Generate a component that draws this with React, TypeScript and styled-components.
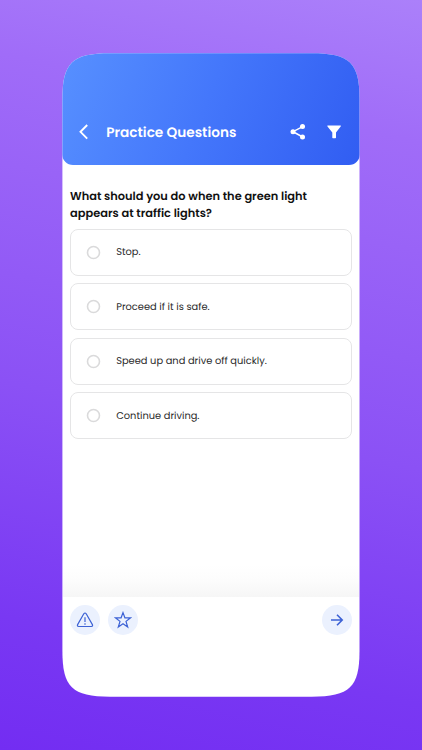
import React from "react";
import styled, { createGlobalStyle } from "styled-components";

const GlobalStyle = createGlobalStyle`
  * { box-sizing: border-box; }
  body { margin: 0; }
  button { border: 0; padding: 0; background: none; font: inherit; color: inherit; }
`;

const Stage = styled.main`
  width: 422px;
  height: 750px;
  padding: 53px 0 0 62px;
  overflow: hidden;
  background: linear-gradient(192deg, #ab80fa 0%, #a06cf8 17%, #8b51f5 56%, #7938f3 84%, #732df2 100%);
  font-family: Poppins, Inter, "Liberation Sans", sans-serif;
  text-rendering: geometricPrecision;
`;

const Phone = styled.section`
  display: flex;
  flex-direction: column;
  width: 298px;
  height: 644px;
  background: #fff;
  clip-path: path("M.4 46C.4 10 10 .3 48 .3H249.5C288 .3 297.5 10 297.5 46V598C297.5 634 288 643.7 249.5 643.7H48C10 643.7 .4 634 .4 598Z");
`;

const Header = styled.header`
  display: flex;
  align-items: center;
  height: 112px;
  flex: none;
  padding: 46px 16px 0 12px;
  border-radius: 0 0 11px 11px;
  background: linear-gradient(112deg, #5790ff 0%, #4477fb 48%, #315df2 100%);
  color: #fff;
`;

const Title = styled.h1`
  flex: 1;
  margin: 1px 0 0 12.3px;
  font-size: 13.65px;
  line-height: 20px;
  font-weight: 600;
  white-space: nowrap;
`;

const HeaderButton = styled.button<{ $gap?: number }>`
  display: flex;
  width: 20px;
  height: 20px;
  align-items: center;
  justify-content: center;
  margin-left: ${({ $gap = 0 }) => $gap}px;
`;

const Content = styled.div`
  flex: 1;
  padding: 22.5px 8px 0;
`;

const Question = styled.h2`
  margin: 0;
  color: #111;
  font-size: 11.4px;
  line-height: 17px;
  font-weight: 600;
`;

const QuestionLine = styled.span`
  display: block;
  white-space: nowrap;
`;

const Options = styled.div`
  display: grid;
  gap: 7.5px;
  margin-top: 7px;
`;

const Option = styled.label`
  display: flex;
  align-items: center;
  height: 47px;
  padding-left: 15px;
  border: 1px solid #e5e5e6;
  border-radius: 8px;
`;

const Radio = styled.svg`
  width: 15px;
  height: 15px;
  fill: none;
  stroke: #dadadb;
  stroke-width: 1.6;
`;

const OptionText = styled.span`
  margin: 2px 0 0 15.2px;
  color: #292929;
  font-size: 9.85px;
  line-height: 16px;
`;

const BottomShade = styled.div`
  height: 32px;
  flex: none;
  margin: 0 1px;
  background: linear-gradient(to bottom, #fff 0%, #fcfcfc 50%, #f6f6f6 100%);
`;

const Footer = styled.footer`
  display: flex;
  gap: 7.5px;
  height: 100px;
  flex: none;
  padding: 7.6px 7.6px 0 7.8px;
`;

const RoundButton = styled.button<{ $end?: boolean }>`
  display: flex;
  align-items: center;
  justify-content: center;
  width: 30.4px;
  height: 30.4px;
  margin-left: ${({ $end }) => ($end ? "auto" : "0")};
  border-radius: 50%;
  background: #ebf1fe;
  color: #3d62d5;
`;

const options = [
  "Stop.",
  "Proceed if it is safe.",
  "Speed up and drive off quickly.",
  "Continue driving.",
];

export default function App() {
  return (
    <>
      <GlobalStyle />
      <Stage>
        <Phone>
          <Header>
            <HeaderButton aria-label="Back">
              <svg width="20" height="20" viewBox="0 0 20 20" fill="none" stroke="currentColor" strokeWidth="1.9">
                <path d="M13.2 3 6.5 9.8l6.7 6.8" />
              </svg>
            </HeaderButton>
            <Title>Practice Questions</Title>
            <HeaderButton aria-label="Share">
              <svg width="20" height="20" viewBox="0 0 20 20" fill="currentColor">
                <path d="M14.7 4.7 5 9.7l9.7 5.3" fill="none" stroke="currentColor" strokeWidth="1.5" />
                <circle cx="14.5" cy="4.5" r="2.5" />
                <circle cx="5" cy="9.8" r="2.5" />
                <circle cx="14.5" cy="15.1" r="2.5" />
              </svg>
            </HeaderButton>
            <HeaderButton aria-label="Filter" $gap={16}>
              <svg width="20" height="20" viewBox="0 0 20 20" fill="currentColor">
                <path d="M3.8 3.5h12.6c.5 0 .6.5.3.9L12 10.4v5.2c0 .4-.2.6-.6.6H8.9c-.4 0-.6-.2-.6-.6v-5.2L3.5 4.4c-.3-.4-.2-.9.3-.9Z" />
              </svg>
            </HeaderButton>
          </Header>
          <Content>
            <Question>
              <QuestionLine>What should you do when the green light</QuestionLine>
              <QuestionLine>appears at traffic lights?</QuestionLine>
            </Question>
            <Options>
              {options.map((text) => (
                <Option key={text}>
                  <Radio viewBox="0 0 15 15">
                    <circle cx="7.5" cy="7.5" r="6" />
                  </Radio>
                  <OptionText>{text}</OptionText>
                </Option>
              ))}
            </Options>
          </Content>
          <BottomShade />
          <Footer>
            <RoundButton aria-label="Report question">
              <svg width="18" height="18" viewBox="0 0 18 18" fill="none" stroke="currentColor" strokeWidth="1.2" strokeLinejoin="round">
                <path d="M7.8 2.8q1.2-1.6 2.4 0l6.2 10.8q.7 1.7-1.1 1.9H2.7q-1.8-.2-1.1-1.9Z" />
                <path d="M9 6.2v4.9M9 12.2v1.5" />
              </svg>
            </RoundButton>
            <RoundButton aria-label="Save question">
              <svg width="18" height="18" viewBox="0 0 18 18" fill="none" stroke="currentColor" strokeWidth="1.2" strokeLinejoin="miter">
                <path d="m9 1.6 1.9 5.2h5.7L12 10.4l1.7 5.7L9 12.8l-4.7 3.3L6 10.4 1.4 6.8h5.7Z" />
              </svg>
            </RoundButton>
            <RoundButton aria-label="Next question" $end>
              <svg width="18" height="18" viewBox="0 0 18 18" fill="none" stroke="currentColor" strokeWidth="1.6">
                <path d="M3 9h11.2M9 3.8 14.2 9 9 14.2" />
              </svg>
            </RoundButton>
          </Footer>
        </Phone>
      </Stage>
    </>
  );
}
